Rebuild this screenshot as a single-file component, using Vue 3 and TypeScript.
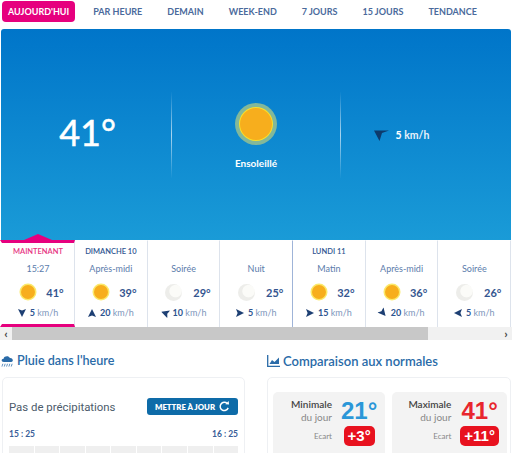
<script setup lang="ts">
interface Slot {
  head?: string;
  label: string;
  icon: 'sun' | 'moon';
  temp: number;
  wind: number;
  rot: number;
  cls?: string;
}
interface Norm {
  title: string;
  value: string;
  tone: string;
  gap: string;
}
const tabs: string[] = ['PAR HEURE', 'DEMAIN', 'WEEK-END', '7 JOURS', '15 JOURS', 'TENDANCE'];
const slots: Slot[] = [
  { head: 'MAINTENANT', label: '15:27', icon: 'sun', temp: 41, wind: 5, rot: 180, cls: 'now' },
  { head: 'DIMANCHE 10', label: 'Après-midi', icon: 'sun', temp: 39, wind: 20, rot: 0 },
  { label: 'Soirée', icon: 'moon', temp: 29, wind: 10, rot: 290 },
  { label: 'Nuit', icon: 'moon', temp: 25, wind: 5, rot: 90 },
  { head: 'LUNDI 11', label: 'Matin', icon: 'sun', temp: 32, wind: 15, rot: 90, cls: 'day' },
  { label: 'Après-midi', icon: 'sun', temp: 36, wind: 20, rot: 140 },
  { label: 'Soirée', icon: 'moon', temp: 26, wind: 5, rot: 270 },
];
const norms: Norm[] = [
  { title: 'Minimale', value: '21°', tone: 'blue', gap: '+3°' },
  { title: 'Maximale', value: '41°', tone: 'red', gap: '+11°' },
];
const rain: number[] = [1, 2, 3, 4, 5, 6, 7, 8, 9];
</script>

<template>
  <div class="page">
    <nav class="tabs">
      <a class="tab active">AUJOURD'HUI</a>
      <a v-for="t in tabs" :key="t" class="tab">{{ t }}</a>
    </nav>

    <section class="hero">
      <div class="hero-col temp">41°</div>
      <div class="hero-col mid">
        <div class="big-sun"></div>
        <div class="sky">Ensoleillé</div>
      </div>
      <div class="hero-col wind">
        <svg width="15" height="11" viewBox="0 0 15 11"><path d="M0 0.500 L15 0.500 L8 3 L5.500 11 Z" fill="#0d3a6b" /></svg>
        <span><b>5</b> km/h</span>
      </div>
    </section>

    <div class="strip">
      <div v-for="(s, i) in slots" :key="i" class="cell" :class="s.cls">
        <div v-if="s.cls === 'now'" class="notch"></div>
        <div class="head">{{ s.head }}</div>
        <div class="label">{{ s.label }}</div>
        <div class="cond">
          <span :class="s.icon === 'sun' ? 'sun' : 'moon'"></span>
          <span class="deg">{{ s.temp }}°</span>
        </div>
        <div class="w">
          <svg width="8" height="8" viewBox="0 0 10 10" :style="{ transform: `rotate(${s.rot}deg)` }">
            <path d="M5 0 L10 10 L5 8 L0 10 Z" fill="#1d3f73" />
          </svg>
          <span><b>{{ s.wind }}</b> km/h</span>
        </div>
      </div>
    </div>
    <div class="bar">
      <span class="arrow">‹</span>
      <div class="thumb"></div>
      <span class="arrow right">›</span>
    </div>

    <div class="cols">
      <section class="col left">
        <h2>
          <svg width="13" height="14" viewBox="0 0 14 14">
            <path d="M3 8 C0 8 0 4.500 2.800 4.500 C3.300 1.500 8.500 1 9.500 3.800 C13 3.500 14 8 11 8 Z" fill="#2a6ba8" />
            <path d="M2 10 L1 13 M4.500 10 L3.500 13 M7 10 L6 13 M9.500 10 L8.500 13 M12 10 L11 13" stroke="#2a6ba8" stroke-width="0.8" />
          </svg>
          Pluie dans l'heure
        </h2>
        <div class="card rain">
          <div class="rain-top">
            <span class="none">Pas de précipitations</span>
            <button class="update">
              METTRE À JOUR
              <svg width="11" height="11" viewBox="0 0 12 12"><path d="M10 7.500 A4.500 4.500 0 1 1 9 2.800" fill="none" stroke="#fff" stroke-width="1.600" /><path d="M7 3.500 L11 3.800 L10.500 0 Z" fill="#fff" /></svg>
            </button>
          </div>
          <div class="times"><span>15 : 25</span><span>16 : 25</span></div>
          <div class="rain-bars"><i v-for="r in rain" :key="r"></i></div>
        </div>
      </section>
      <section class="col right">
        <h2>
          <svg width="13" height="12" viewBox="0 0 13 12">
            <path d="M0.700 0 V11.300 H13" fill="none" stroke="#2a6ba8" stroke-width="1.300" />
            <path d="M2.500 9 L5 5 L7.500 7 L12 2.500 V9 Z" fill="#2a6ba8" />
          </svg>
          Comparaison aux normales
        </h2>
        <div class="card compare">
          <div v-for="n in norms" :key="n.title" class="norm">
            <div class="norm-txt"><strong>{{ n.title }}</strong><span>du jour</span></div>
            <div class="norm-v"><span class="norm-val" :class="n.tone">{{ n.value }}</span></div>
            <em>Ecart</em>
            <div class="norm-v"><b class="gap">{{ n.gap }}</b></div>
          </div>
        </div>
      </section>
    </div>
  </div>
</template>

<style>
html, body { margin: 0; background: #fff; overflow: hidden; }
</style>

<style scoped>
.page {
  width: 512px;
  height: 453px;
  overflow: hidden;
  font-family: Lato, "Noto Sans", sans-serif;
  color: #2d5490;
}
.tabs {
  display: flex;
  height: 29px;
  padding: 1px 0 0 2px;
  box-sizing: border-box;
  align-items: flex-start;
}
.tab {
  font-size: 9px;
  font-weight: 700;
  line-height: 21px;
  height: 21px;
  margin-right: 25px;
  color: #4a6a9c;
  white-space: nowrap;
}
.tab.active {
  background: #e6007e;
  color: #fff;
  border-radius: 4px;
  padding: 0 6px;
  margin-right: 18px;
}
.hero {
  height: 211px;
  margin: 0 1px;
  border-radius: 3px 3px 0 0;
  background: linear-gradient(#0075c9, #1a9bd7);
  display: grid;
  grid-template-columns: 170px 170px 170px;
  color: #fff;
}
.hero-col {
  box-sizing: border-box;
  margin-top: 63px;
  height: 86px;
  display: flex;
  align-items: center;
  justify-content: center;
}
.temp { font-size: 36px; font-weight: 400; -webkit-text-stroke: 0.5px #fff; margin-top: 60px; padding-left: 3px; }
.mid {
  flex-direction: column;
  padding-top: 7px;
  border-left: 1px solid transparent;
  border-right: 1px solid transparent;
  border-image: linear-gradient(rgba(255,255,255,0), rgba(255,255,255,0.65), rgba(255,255,255,0)) 1;
}
.big-sun {
  width: 32px;
  height: 32px;
  border-radius: 50%;
  background: #f7ae1d;
  box-shadow: 0 0 0 1px #f9e02a, 0 0 0 5px #82b89a;
  margin-bottom: 17px;
}
.sky { font-size: 10px; font-weight: 700; }
.wind { font-size: 10.500px; font-weight: 700; gap: 7px; padding-right: 49px; color: #e8f2fa; }
.wind b { font-weight: 700; color: #fff; }
.strip { display: flex; height: 87px; }
.cell {
  flex: 0 0 72.7px;
  box-sizing: border-box;
  border-right: 1px solid #dde3ec;
  border-top: 1px solid #fff;
  text-align: center;
  position: relative;
  padding-top: 5px;
}
.cell:nth-child(4) { border-right: 1px solid #9fb4d8; }
.cell.now {
  flex-basis: 75px;
  border-left: 2px solid #fff;
  border-top: 3px solid #e6007e;
  border-bottom: 3px solid #e6007e;
  padding-top: 3px;
}
.notch {
  position: absolute;
  left: 22px;
  top: -9px;
  width: 0;
  height: 0;
  border-left: 14px solid transparent;
  border-right: 14px solid transparent;
  border-bottom: 6px solid #e6007e;
}
.head { font-size: 7.500px; font-weight: 600; height: 12px; line-height: 12px; white-space: nowrap; color: #2d5490; }
.now .head { color: #e6337f; }
.label { font-size: 9px; margin-top: 5px; height: 12px; line-height: 12px; color: #5b7cab; }
.cond { display: flex; align-items: center; justify-content: center; gap: 11px; margin-top: 7px; height: 20px; padding-left: 9px; }
.sun {
  width: 14px;
  height: 14px;
  border-radius: 50%;
  background: #f7ae1d;
  box-shadow: 0 0 0 1.500px #fbe96a;
}
.moon {
  width: 17px;
  height: 17px;
  border-radius: 50%;
  background: radial-gradient(circle at 62% 42%, #fbfbf8 40%, #ededea 46%);
}
.deg { font-size: 11px; font-weight: 700; color: #34558f; }
.w { display: flex; align-items: center; justify-content: center; gap: 4px; margin-top: 5px; font-size: 9px; color: #7d95bb; }
.w b { color: #2d5490; font-weight: 700; }
.bar {
  height: 13px;
  display: flex;
  background: #f1f1f1;
  align-items: center;
}
.arrow { width: 12px; font-size: 12px; line-height: 12px; font-weight: 700; text-align: center; color: #444; }
.arrow.right { margin-left: auto; }
.thumb { width: 416px; height: 13px; background: #c8c8c8; }
.cols {
  display: grid;
  grid-template-columns: 243px 244px;
  column-gap: 22px;
  padding: 11px 0 0 2px;
}
h2 {
  margin: 0 0 6px;
  height: 20px;
  line-height: 20px;
  font-size: 13px;
  font-weight: 600;
  color: #2a6ba8;
  display: flex;
  align-items: center;
  gap: 3px;
  white-space: nowrap;
}
.col.left h2 { margin-left: -1px; font-size: 12.600px; }
.card {
  border: 1px solid #eef0f3;
  border-radius: 5px;
  box-sizing: border-box;
  height: 120px;
}
.rain { padding: 20px 6px 0 6px; }
.rain-top { display: flex; justify-content: space-between; align-items: center; }
.none { font-family: Roboto, sans-serif; font-size: 11.400px; color: #4c5b6b; }
.update {
  border: 0;
  font-family: inherit;
  background: #0e6ba8;
  color: #fff;
  border-radius: 3px;
  height: 17px;
  width: 91px;
  padding: 0;
  font-size: 7.800px;
  font-weight: 800;
  display: flex;
  align-items: center;
  justify-content: center;
  gap: 4px;
}
.times { display: flex; justify-content: space-between; font-size: 8.500px; font-weight: 700; margin-top: 14px; color: #3a6098; }
.rain-bars { display: flex; gap: 1px; margin-top: 7px; }
.rain-bars i { flex: 1; height: 20px; background: #efefef; }
.compare { display: flex; gap: 7px; padding: 14px 6px 0 5px; }
.norm {
  flex: 1;
  background: #f3f3f3;
  border-radius: 5px;
  height: 90px;
  padding: 4px 8px 0 0;
  box-sizing: border-box;
  display: grid;
  grid-template-columns: 59px 1fr;
  grid-template-rows: 29px 21px;
  column-gap: 9px;
  align-items: center;
  align-content: start;
}
.norm-txt { display: flex; flex-direction: column; align-items: flex-end; font-size: 10px; line-height: 13px; }
.norm-txt strong { font-weight: 600; color: #444; }
.norm-txt span { color: #888; }
.norm-v { display: flex; justify-content: center; }
.norm-val { font-family: "Liberation Sans", sans-serif; font-size: 24px; line-height: 29px; font-weight: 700; }
.blue { color: #2b97d8; }
.red { color: #e8262e; }
em { font-style: normal; font-size: 8px; color: #888; text-align: right; }
.gap {
  font-family: "Liberation Sans", sans-serif;
  background: #e8121f;
  color: #fff;
  font-size: 15px;
  line-height: 20px;
  height: 20px;
  border-radius: 5px;
  padding: 0 4px;
  white-space: nowrap;
}
</style>
